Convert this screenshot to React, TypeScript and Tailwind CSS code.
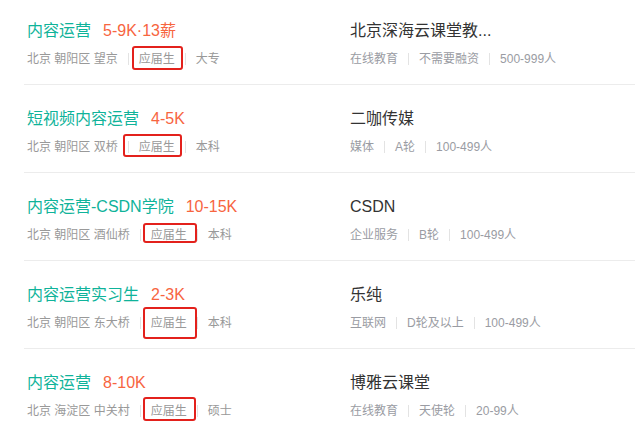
import React from 'react'

type Job = {
  title: string
  salary: string
  area: string
  degree: string
  company: string
  info: string[]
  // red annotation box, relative to the row
  mark: { left: number; top: number; width: number; height: number }
}

const jobs: Job[] = [
  {
    title: '内容运营',
    salary: '5-9K·13薪',
    area: '北京 朝阳区 望京',
    degree: '大专',
    company: '北京深海云课堂教...',
    info: ['在线教育', '不需要融资', '500-999人'],
    mark: { left: 132, top: 46, width: 51, height: 24 },
  },
  {
    title: '短视频内容运营',
    salary: '4-5K',
    area: '北京 朝阳区 双桥',
    degree: '本科',
    company: '二咖传媒',
    info: ['媒体', 'A轮', '100-499人'],
    mark: { left: 123, top: 49, width: 59, height: 23 },
  },
  {
    title: '内容运营-CSDN学院',
    salary: '10-15K',
    area: '北京 朝阳区 酒仙桥',
    degree: '本科',
    company: 'CSDN',
    info: ['企业服务', 'B轮', '100-499人'],
    mark: { left: 143, top: 50, width: 54, height: 20 },
  },
  {
    title: '内容运营实习生',
    salary: '2-3K',
    area: '北京 朝阳区 东大桥',
    degree: '本科',
    company: '乐纯',
    info: ['互联网', 'D轮及以上', '100-499人'],
    mark: { left: 143, top: 46, width: 54, height: 32 },
  },
  {
    title: '内容运营',
    salary: '8-10K',
    area: '北京 海淀区 中关村',
    degree: '硕士',
    company: '博雅云课堂',
    info: ['在线教育', '天使轮', '20-99人'],
    mark: { left: 143, top: 48, width: 53, height: 24 },
  },
]

function Sep() {
  return <span className="mx-[10px] inline-block h-[12px] w-px bg-[#e3e3e3]" />
}

function JobRow({ job, first }: { job: Job; first: boolean }) {
  return (
    <div className="relative">
      <div
        className={`ml-[24px] grid grid-cols-[323px_1fr] border-b border-[#ececec] pl-[3px] pb-[16px] ${
          first ? 'pt-[20px]' : 'pt-[23px]'
        }`}
      >
        <div>
          <div className="flex h-[22px] items-center text-[16px] leading-[22px]">
            <span className="text-[#0fb39a]">{job.title}</span>
            <span className="ml-[12px] text-[#f7653f]">{job.salary}</span>
          </div>
          <div className="mt-[8px] flex h-[18px] items-center text-[12px] leading-[18px] text-[#999]">
            <span>{job.area}</span>
            <Sep />
            <span>应届生</span>
            <Sep />
            <span>{job.degree}</span>
          </div>
        </div>
        <div>
          <div className="h-[22px] text-[16px] leading-[22px] text-[#333]">{job.company}</div>
          <div className="mt-[8px] flex h-[18px] items-center text-[12px] leading-[18px] text-[#9a9ca3]">
            {job.info.map((t, i) => (
              <React.Fragment key={t + i}>
                {i > 0 && <Sep />}
                <span>{t}</span>
              </React.Fragment>
            ))}
          </div>
        </div>
      </div>
      <div
        className="pointer-events-none absolute rounded-[3px] border-2 border-[#e3211c]"
        style={{
          left: job.mark.left,
          top: job.mark.top,
          width: job.mark.width,
          height: job.mark.height,
        }}
      />
    </div>
  )
}

export default function App() {
  return (
    <div
      className="h-[436px] w-[635px] overflow-hidden bg-white"
      style={{ fontFamily: '"Liberation Sans", "Noto Sans CJK SC", sans-serif' }}
    >
      {jobs.map((job, i) => (
        <JobRow key={i} job={job} first={i === 0} />
      ))}
    </div>
  )
}
